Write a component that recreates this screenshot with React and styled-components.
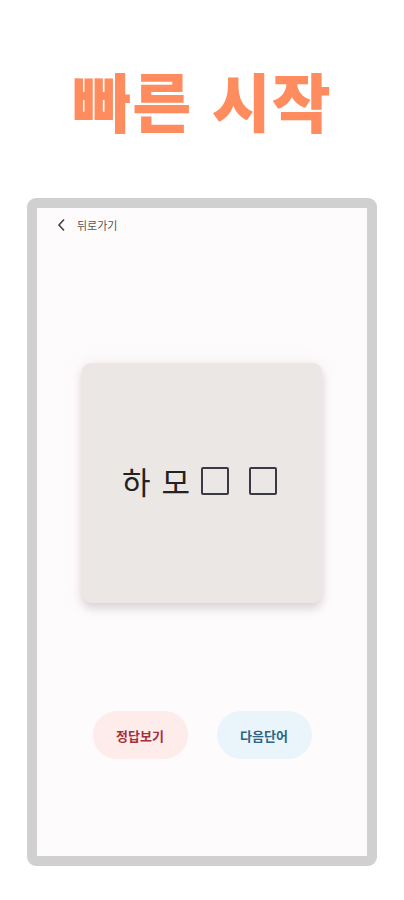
import React from 'react'
import styled, { createGlobalStyle } from 'styled-components'

const GlobalStyle = createGlobalStyle`
  html, body {
    margin: 0;
    padding: 0;
    background: #ffffff;
    font-family: 'Noto Sans CJK KR', 'Noto Sans', sans-serif;
  }
`

const Page = styled.div`
  width: 404px;
  height: 900px;
  display: flex;
  flex-direction: column;
  align-items: center;
  overflow: hidden;
`

const Title = styled.h1`
  margin: 58px 0 0;
  height: 82px;
  font-size: 64px;
  line-height: 82px;
  font-weight: 900;
  color: #ff8c5f;
  letter-spacing: 1px;
  word-spacing: 4px;
`

const Phone = styled.section`
  margin-top: 58px;
  width: 330px;
  height: 648px;
  border: 10px solid #d0d0d0;
  border-radius: 9px;
  background: #fdfbfc;
  display: flex;
  flex-direction: column;
`

const Header = styled.div`
  height: 36px;
  padding: 0 0 0 20px;
  display: flex;
  align-items: center;
  gap: 10px;
  margin-top: -1px;
`

const BackLabel = styled.span`
  font-size: 11px;
  color: #555555;
`

const Body = styled.div`
  flex: 1;
  display: flex;
  flex-direction: column;
  align-items: center;
`

const Card = styled.div`
  margin-top: 120px;
  width: 240px;
  height: 240px;
  border-radius: 9px;
  background: #ebe7e4;
  box-shadow: 0 6px 10px rgba(0, 0, 0, 0.12), 0 0 14px rgba(240, 200, 210, 0.35);
  display: flex;
  align-items: center;
  justify-content: center;
`

const Word = styled.div`
  display: flex;
  align-items: center;
  gap: 11px;
  font-size: 31px;
  line-height: 1;
  color: #222222;
  margin: 0 5px 5px 0;
`

const Blank = styled.span`
  width: 28px;
  height: 28px;
  box-sizing: border-box;
  border: 2px solid #3a3a46;
  border-radius: 2px;
  & + & {
    margin-left: 9px;
  }
`

const Actions = styled.div`
  margin-top: 108px;
  display: flex;
  gap: 29px;
`

const Pill = styled.button`
  width: 95px;
  height: 48px;
  border: none;
  border-radius: 24px;
  background: ${(p) => p.bg};
  color: ${(p) => p.fg};
  font-family: inherit;
  font-size: 13px;
  font-weight: 700;
  padding: 0;
`

function BackIcon() {
  return (
    <svg width="10" height="14" viewBox="0 0 10 14">
      <path d="M7 1.5 L2 7 L7 12.5" fill="none" stroke="#444" strokeWidth="1.6" />
    </svg>
  )
}

export default function App() {
  return (
    <>
      <GlobalStyle />
      <Page>
        <Title>빠른 시작</Title>
        <Phone>
          <Header>
            <BackIcon />
            <BackLabel>뒤로가기</BackLabel>
          </Header>
          <Body>
            <Card>
              <Word>
                <span>하</span>
                <span>모</span>
                <Blank aria-label="□" />
                <Blank aria-label="□" />
              </Word>
            </Card>
            <Actions>
              <Pill bg="#fdecea" fg="#a3303f">정답보기</Pill>
              <Pill bg="#e9f5fb" fg="#2d6585">다음단어</Pill>
            </Actions>
          </Body>
        </Phone>
      </Page>
    </>
  )
}
